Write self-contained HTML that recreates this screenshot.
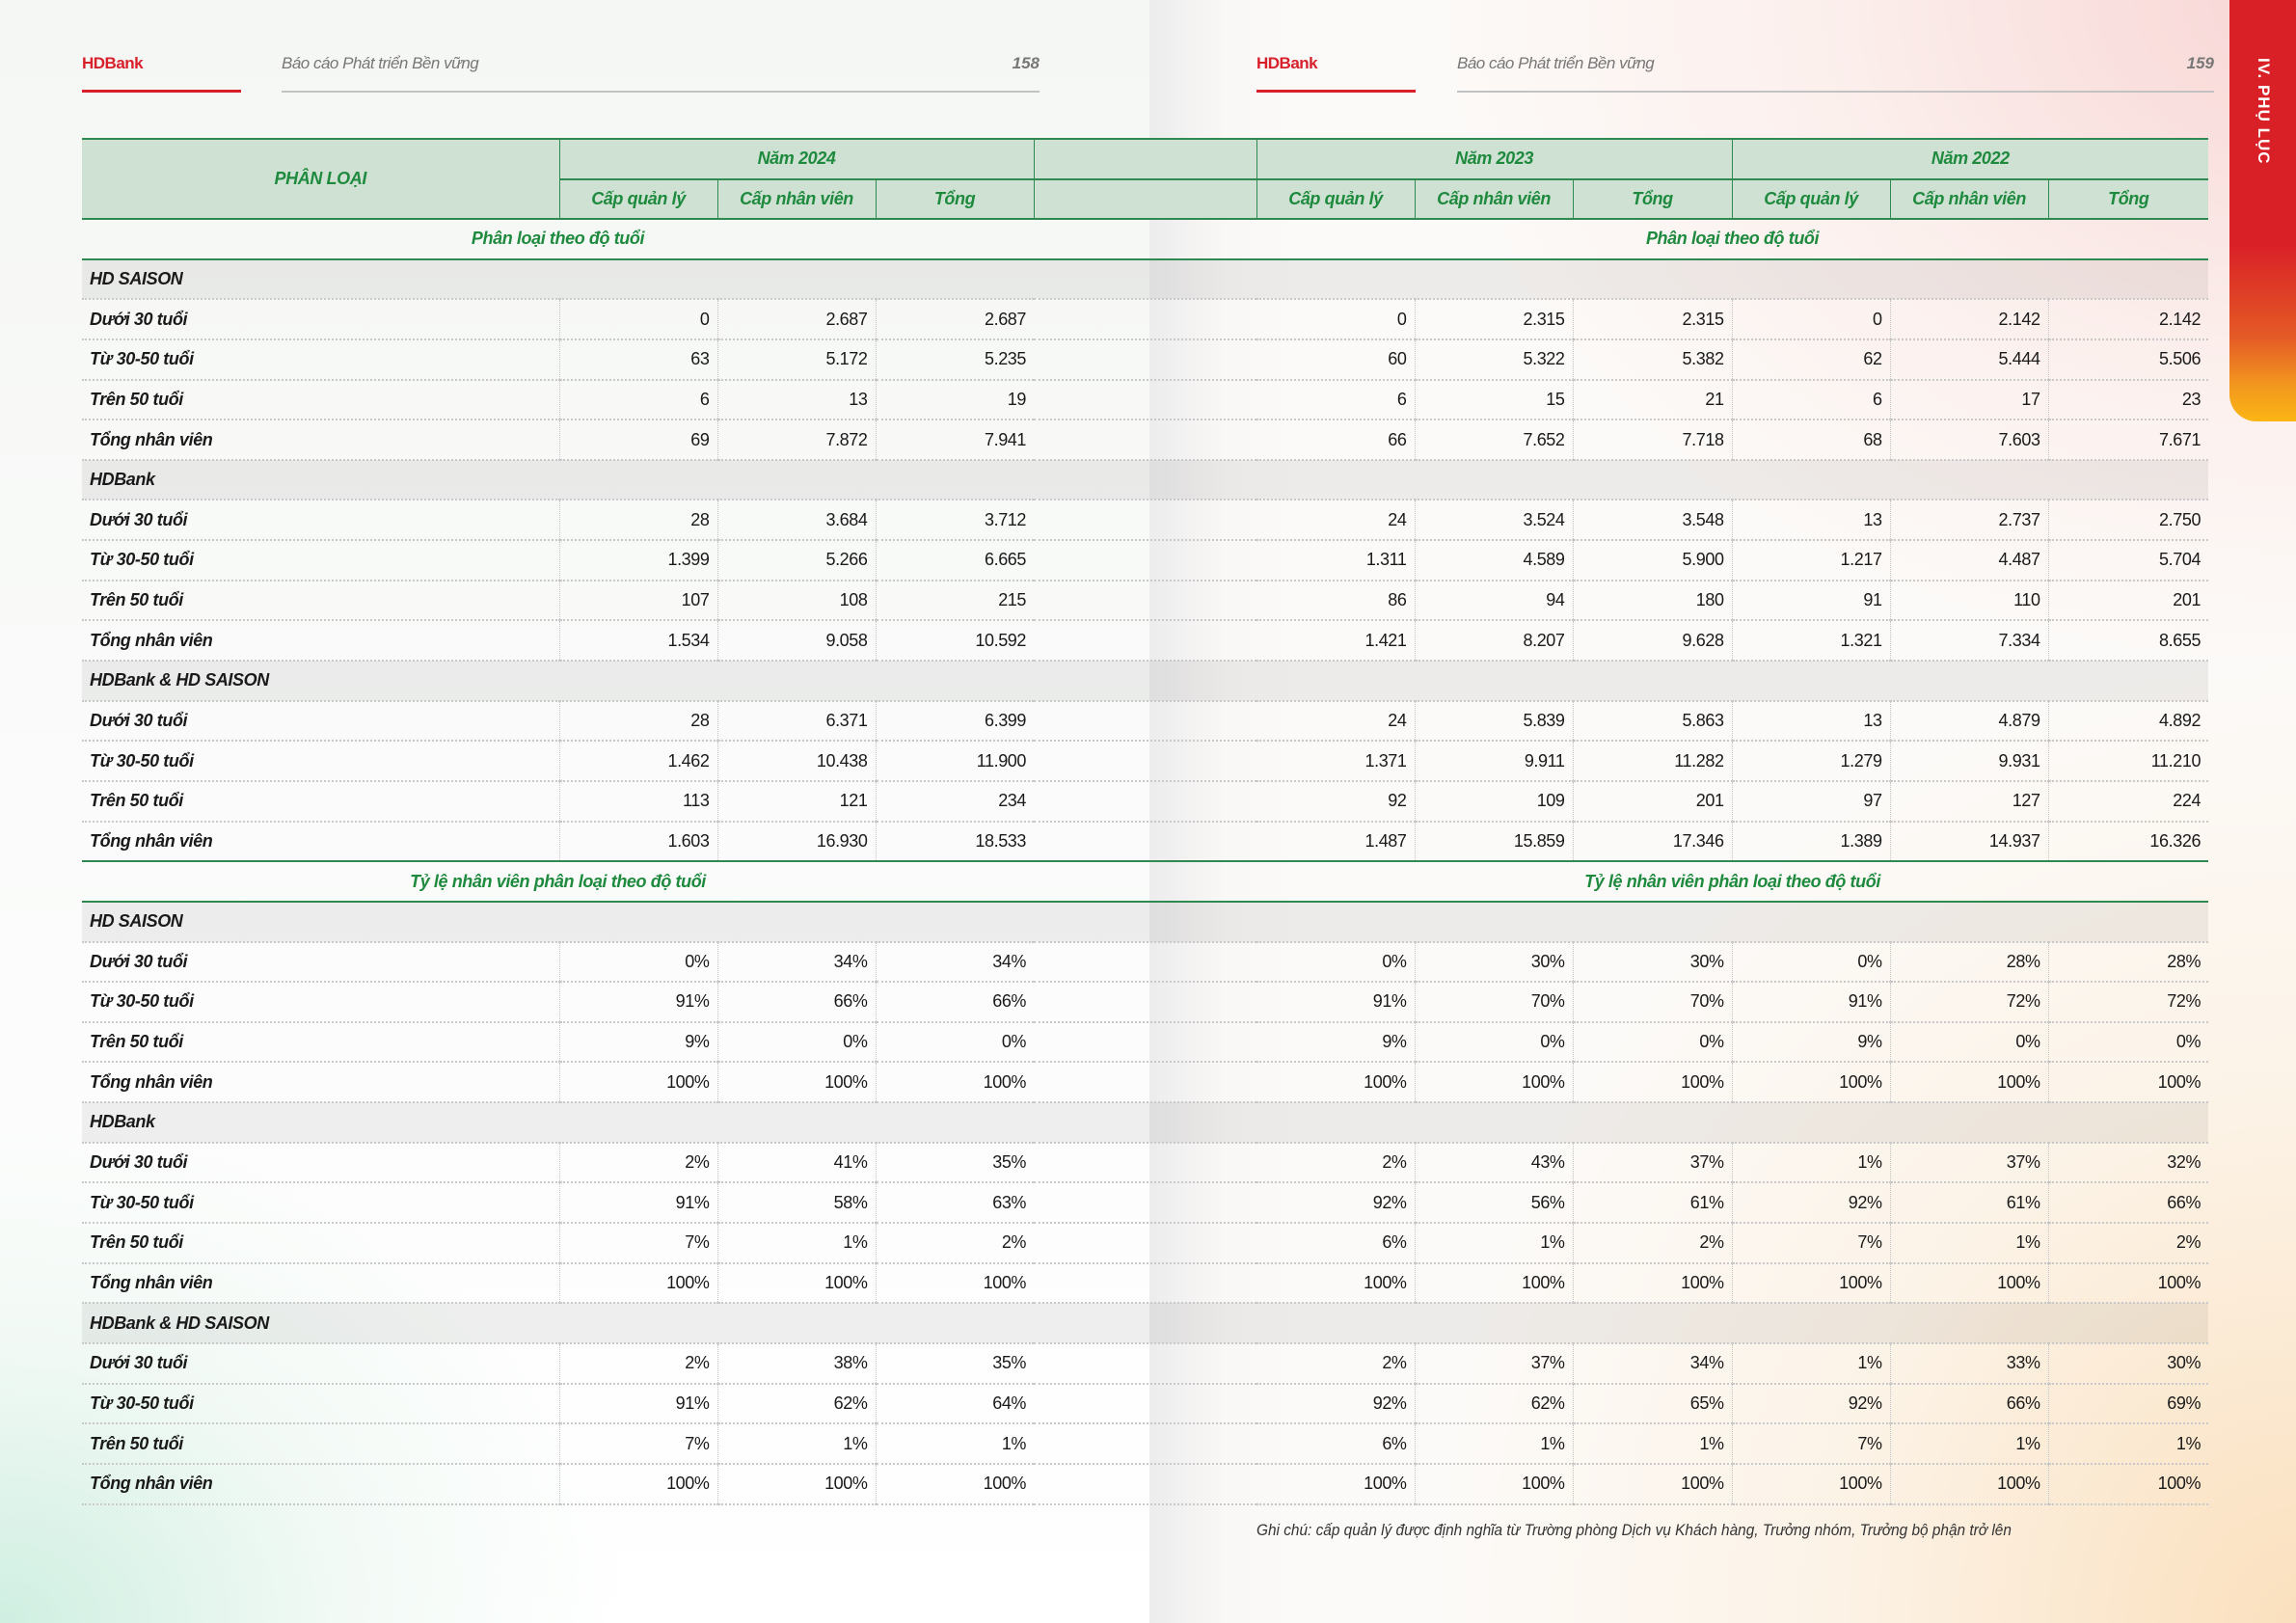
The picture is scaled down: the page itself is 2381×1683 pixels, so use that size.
<!DOCTYPE html>
<html><head><meta charset="utf-8">
<style>
*{margin:0;padding:0;box-sizing:border-box}
body{width:2381px;height:1683px;position:relative;overflow:hidden;font-family:"Liberation Sans Narrow","Liberation Sans",sans-serif;color:#1a1a1a;background:#fff}
.lp{position:absolute;left:0;top:0;width:1192px;height:1683px;background:
radial-gradient(ellipse 650px 520px at 0 1683px,rgba(175,228,205,.6),rgba(205,235,218,.25) 55%,rgba(255,255,255,0) 100%),
linear-gradient(180deg,#f5f7f4,#fafbfa 50%,#fff)}
.rp{position:absolute;left:1192px;top:0;width:1189px;height:1683px;background:
linear-gradient(90deg,rgba(225,225,228,.55),rgba(240,240,240,.2) 80px,rgba(255,255,255,0) 160px),
radial-gradient(ellipse 900px 700px at 1189px 0,rgba(245,190,190,.6),rgba(250,215,210,.3) 55%,rgba(255,255,255,0) 100%),
radial-gradient(ellipse 900px 1000px at 1189px 1683px,rgba(250,215,170,.75),rgba(252,230,200,.35) 55%,rgba(255,255,255,0) 100%),
#fcfaf8}
.tab{position:absolute;left:2312px;top:0;width:69px;height:437px;border-bottom-left-radius:28px;background:linear-gradient(180deg,#d92027 0,#d92027 58%,#e45a26 80%,#f39a1e 92%,#fbb514 100%)}
.tab span{position:absolute;left:50%;top:60px;transform-origin:0 0;transform:rotate(90deg) translate(0,-50%);white-space:nowrap;color:#fff;font-family:"Liberation Sans",sans-serif;font-weight:bold;font-size:17px;letter-spacing:1px}
.hb{position:absolute;top:56px;font-weight:bold;color:#d7202a;font-size:17px;letter-spacing:-.5px}
.rl{position:absolute;top:93px;width:165px;height:3px;background:#d7202a}
.gl{position:absolute;top:94px;height:2px;background:#c2c2c2}
.ti{position:absolute;top:56px;font-style:italic;color:#777;font-size:17px;letter-spacing:-.5px}
.pn{position:absolute;top:56px;font-style:italic;color:#777;font-size:17px;font-weight:bold;text-align:right}
table{position:absolute;left:85px;top:143px;width:2205px;border-collapse:collapse;table-layout:fixed;font-size:18px;letter-spacing:-.4px}
td{height:41.65px;padding:0 8px;white-space:nowrap;border-bottom:2px dotted #c9c9c9}
.h td{background:#cfe1d2;color:#1e8a3e;font-weight:bold;font-style:italic;text-align:center;border:1.5px solid #2f8a52;border-top:2px solid #2f8a52;height:41.5px}
.s td{color:#1e8a3e;font-weight:bold;font-style:italic;text-align:center;border-bottom:2px solid #2f8a52;border-top:2px solid #2f8a52;height:41.65px}
.g td{background:rgba(0,0,0,.06);font-weight:bold;font-style:italic}
td.l{font-weight:bold;font-style:italic;text-align:left}
td.n{text-align:right}
td.d{border-left:1.5px dotted #c4c4c4}
.fn{position:absolute;left:1303px;top:1577px;font-style:italic;font-size:17px;color:#333;transform:scaleX(.905);transform-origin:0 0;white-space:nowrap}
</style></head><body>
<div class="lp"></div><div class="rp"></div>
<div class="tab"><span>IV. PHỤ LỤC</span></div>

<div class="hb" style="left:85px">HDBank</div>
<div class="rl" style="left:85px"></div>
<div class="ti" style="left:292px">Báo cáo Phát triển Bền vững</div>
<div class="pn" style="left:1000px;width:78px">158</div>
<div class="gl" style="left:292px;width:786px"></div>

<div class="hb" style="left:1303px">HDBank</div>
<div class="rl" style="left:1303px"></div>
<div class="ti" style="left:1511px">Báo cáo Phát triển Bền vững</div>
<div class="pn" style="left:2218px;width:78px">159</div>
<div class="gl" style="left:1511px;width:785px"></div>

<table>
<colgroup><col style="width:495px"><col style="width:164px"><col style="width:164px"><col style="width:164px"><col style="width:231px"><col style="width:164px"><col style="width:164px"><col style="width:165px"><col style="width:164px"><col style="width:164px"><col style="width:166px"></colgroup>
<tr class="h"><td rowspan="2" style="border-left:none">PHÂN LOẠI</td><td colspan="3">Năm 2024</td><td></td><td colspan="3">Năm 2023</td><td colspan="3" style="border-right:none">Năm 2022</td></tr>
<tr class="h"><td>Cấp quản lý</td><td>Cấp nhân viên</td><td>Tổng</td><td></td><td>Cấp quản lý</td><td>Cấp nhân viên</td><td>Tổng</td><td>Cấp quản lý</td><td>Cấp nhân viên</td><td style="border-right:none">Tổng</td></tr>
<tr class="s"><td colspan="4">Phân loại theo độ tuổi</td><td></td><td colspan="6">Phân loại theo độ tuổi</td></tr>

<tr class="g"><td colspan="11">HD SAISON</td></tr>
<tr><td class="l">Dưới 30 tuổi</td><td class="n d">0</td><td class="n d">2.687</td><td class="n d">2.687</td><td></td><td class="n">0</td><td class="n d">2.315</td><td class="n d">2.315</td><td class="n d">0</td><td class="n d">2.142</td><td class="n d">2.142</td></tr>
<tr><td class="l">Từ 30-50 tuổi</td><td class="n d">63</td><td class="n d">5.172</td><td class="n d">5.235</td><td></td><td class="n">60</td><td class="n d">5.322</td><td class="n d">5.382</td><td class="n d">62</td><td class="n d">5.444</td><td class="n d">5.506</td></tr>
<tr><td class="l">Trên 50 tuổi</td><td class="n d">6</td><td class="n d">13</td><td class="n d">19</td><td></td><td class="n">6</td><td class="n d">15</td><td class="n d">21</td><td class="n d">6</td><td class="n d">17</td><td class="n d">23</td></tr>
<tr><td class="l">Tổng nhân viên</td><td class="n d">69</td><td class="n d">7.872</td><td class="n d">7.941</td><td></td><td class="n">66</td><td class="n d">7.652</td><td class="n d">7.718</td><td class="n d">68</td><td class="n d">7.603</td><td class="n d">7.671</td></tr>

<tr class="g"><td colspan="11">HDBank</td></tr>
<tr><td class="l">Dưới 30 tuổi</td><td class="n d">28</td><td class="n d">3.684</td><td class="n d">3.712</td><td></td><td class="n">24</td><td class="n d">3.524</td><td class="n d">3.548</td><td class="n d">13</td><td class="n d">2.737</td><td class="n d">2.750</td></tr>
<tr><td class="l">Từ 30-50 tuổi</td><td class="n d">1.399</td><td class="n d">5.266</td><td class="n d">6.665</td><td></td><td class="n">1.311</td><td class="n d">4.589</td><td class="n d">5.900</td><td class="n d">1.217</td><td class="n d">4.487</td><td class="n d">5.704</td></tr>
<tr><td class="l">Trên 50 tuổi</td><td class="n d">107</td><td class="n d">108</td><td class="n d">215</td><td></td><td class="n">86</td><td class="n d">94</td><td class="n d">180</td><td class="n d">91</td><td class="n d">110</td><td class="n d">201</td></tr>
<tr><td class="l">Tổng nhân viên</td><td class="n d">1.534</td><td class="n d">9.058</td><td class="n d">10.592</td><td></td><td class="n">1.421</td><td class="n d">8.207</td><td class="n d">9.628</td><td class="n d">1.321</td><td class="n d">7.334</td><td class="n d">8.655</td></tr>

<tr class="g"><td colspan="11">HDBank &amp; HD SAISON</td></tr>
<tr><td class="l">Dưới 30 tuổi</td><td class="n d">28</td><td class="n d">6.371</td><td class="n d">6.399</td><td></td><td class="n">24</td><td class="n d">5.839</td><td class="n d">5.863</td><td class="n d">13</td><td class="n d">4.879</td><td class="n d">4.892</td></tr>
<tr><td class="l">Từ 30-50 tuổi</td><td class="n d">1.462</td><td class="n d">10.438</td><td class="n d">11.900</td><td></td><td class="n">1.371</td><td class="n d">9.911</td><td class="n d">11.282</td><td class="n d">1.279</td><td class="n d">9.931</td><td class="n d">11.210</td></tr>
<tr><td class="l">Trên 50 tuổi</td><td class="n d">113</td><td class="n d">121</td><td class="n d">234</td><td></td><td class="n">92</td><td class="n d">109</td><td class="n d">201</td><td class="n d">97</td><td class="n d">127</td><td class="n d">224</td></tr>
<tr><td class="l">Tổng nhân viên</td><td class="n d">1.603</td><td class="n d">16.930</td><td class="n d">18.533</td><td></td><td class="n">1.487</td><td class="n d">15.859</td><td class="n d">17.346</td><td class="n d">1.389</td><td class="n d">14.937</td><td class="n d">16.326</td></tr>

<tr class="s"><td colspan="4">Tỷ lệ nhân viên phân loại theo độ tuổi</td><td></td><td colspan="6">Tỷ lệ nhân viên phân loại theo độ tuổi</td></tr>

<tr class="g"><td colspan="11">HD SAISON</td></tr>
<tr><td class="l">Dưới 30 tuổi</td><td class="n d">0%</td><td class="n d">34%</td><td class="n d">34%</td><td></td><td class="n">0%</td><td class="n d">30%</td><td class="n d">30%</td><td class="n d">0%</td><td class="n d">28%</td><td class="n d">28%</td></tr>
<tr><td class="l">Từ 30-50 tuổi</td><td class="n d">91%</td><td class="n d">66%</td><td class="n d">66%</td><td></td><td class="n">91%</td><td class="n d">70%</td><td class="n d">70%</td><td class="n d">91%</td><td class="n d">72%</td><td class="n d">72%</td></tr>
<tr><td class="l">Trên 50 tuổi</td><td class="n d">9%</td><td class="n d">0%</td><td class="n d">0%</td><td></td><td class="n">9%</td><td class="n d">0%</td><td class="n d">0%</td><td class="n d">9%</td><td class="n d">0%</td><td class="n d">0%</td></tr>
<tr><td class="l">Tổng nhân viên</td><td class="n d">100%</td><td class="n d">100%</td><td class="n d">100%</td><td></td><td class="n">100%</td><td class="n d">100%</td><td class="n d">100%</td><td class="n d">100%</td><td class="n d">100%</td><td class="n d">100%</td></tr>

<tr class="g"><td colspan="11">HDBank</td></tr>
<tr><td class="l">Dưới 30 tuổi</td><td class="n d">2%</td><td class="n d">41%</td><td class="n d">35%</td><td></td><td class="n">2%</td><td class="n d">43%</td><td class="n d">37%</td><td class="n d">1%</td><td class="n d">37%</td><td class="n d">32%</td></tr>
<tr><td class="l">Từ 30-50 tuổi</td><td class="n d">91%</td><td class="n d">58%</td><td class="n d">63%</td><td></td><td class="n">92%</td><td class="n d">56%</td><td class="n d">61%</td><td class="n d">92%</td><td class="n d">61%</td><td class="n d">66%</td></tr>
<tr><td class="l">Trên 50 tuổi</td><td class="n d">7%</td><td class="n d">1%</td><td class="n d">2%</td><td></td><td class="n">6%</td><td class="n d">1%</td><td class="n d">2%</td><td class="n d">7%</td><td class="n d">1%</td><td class="n d">2%</td></tr>
<tr><td class="l">Tổng nhân viên</td><td class="n d">100%</td><td class="n d">100%</td><td class="n d">100%</td><td></td><td class="n">100%</td><td class="n d">100%</td><td class="n d">100%</td><td class="n d">100%</td><td class="n d">100%</td><td class="n d">100%</td></tr>

<tr class="g"><td colspan="11">HDBank &amp; HD SAISON</td></tr>
<tr><td class="l">Dưới 30 tuổi</td><td class="n d">2%</td><td class="n d">38%</td><td class="n d">35%</td><td></td><td class="n">2%</td><td class="n d">37%</td><td class="n d">34%</td><td class="n d">1%</td><td class="n d">33%</td><td class="n d">30%</td></tr>
<tr><td class="l">Từ 30-50 tuổi</td><td class="n d">91%</td><td class="n d">62%</td><td class="n d">64%</td><td></td><td class="n">92%</td><td class="n d">62%</td><td class="n d">65%</td><td class="n d">92%</td><td class="n d">66%</td><td class="n d">69%</td></tr>
<tr><td class="l">Trên 50 tuổi</td><td class="n d">7%</td><td class="n d">1%</td><td class="n d">1%</td><td></td><td class="n">6%</td><td class="n d">1%</td><td class="n d">1%</td><td class="n d">7%</td><td class="n d">1%</td><td class="n d">1%</td></tr>
<tr><td class="l">Tổng nhân viên</td><td class="n d">100%</td><td class="n d">100%</td><td class="n d">100%</td><td></td><td class="n">100%</td><td class="n d">100%</td><td class="n d">100%</td><td class="n d">100%</td><td class="n d">100%</td><td class="n d">100%</td></tr>
</table>

<div class="fn">Ghi chú: cấp quản lý được định nghĩa từ Trường phòng Dịch vụ Khách hàng, Trưởng nhóm, Trưởng bộ phận trở lên</div>
</body></html>
